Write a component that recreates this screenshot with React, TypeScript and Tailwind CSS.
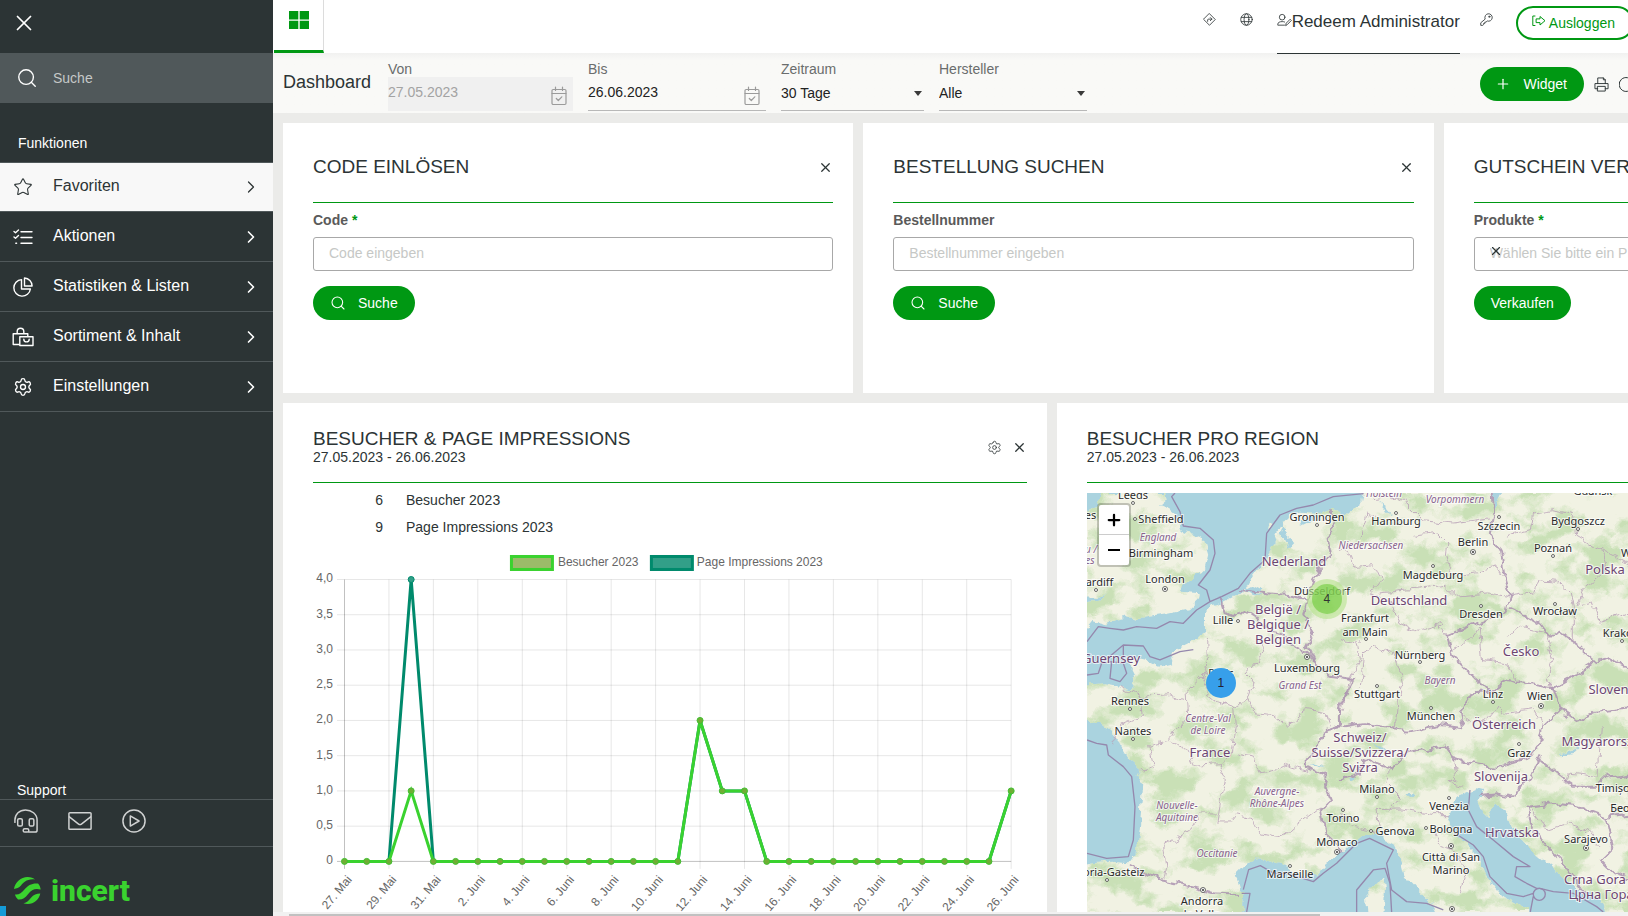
import React from 'react';
import { ChevronRight, Plus, Search, Settings, Star, X } from 'lucide-react';

type IconProps = { className?: string }

const iconProps = {
    fill: 'none',
    stroke: 'currentColor',
    strokeLinecap: 'round' as const,
    strokeLinejoin: 'round' as const,
    'aria-hidden': true,
}

function ChecklistIcon({ className }: IconProps) {
    return (
        <svg {...iconProps} viewBox="0 0 20 20" strokeWidth="1.4" className={className}>
            <path d="M1 4.500l1.500 1.300L5.500 3M1 10l1.500 1.300L5.500 8.500M8 4.800h11M8 10.500h11M8 16.200h11M2.800 16.200h.8" />
        </svg>
    )
}

function PieIcon({ className }: IconProps) {
    return (
        <svg {...iconProps} viewBox="0 0 20 20" strokeWidth="1.4" className={className}>
            <path d="M8.5 2.6A8.3 8.3 0 1 0 17.4 12H8.5z" />
            <path d="M11.5 1v8h7.6a8 8 0 0 0-7.6-8z" />
        </svg>
    )
}

function BagIcon({ className }: IconProps) {
    return (
        <svg {...iconProps} viewBox="0 0 22 20" strokeWidth="1.4" className={className}>
            <path d="M7 17.5H1.2V6.8h14.6v2.4M5.2 6.8V4.6a3.3 3.3 0 0 1 6.6 0v2.2" />
            <path d="M7.8 9.7h13.2v8.8H7.8zM11.8 12.2a2.7 2.7 0 0 0 5.4 0" />
        </svg>
    )
}

function HeadsetIcon({ className }: IconProps) {
    return (
        <svg {...iconProps} viewBox="0 0 26 26" strokeWidth="1.6" className={className}>
            <path d="M1 14.5V12C1 5.500 6 1 12.500 1S25 5.500 25 12v11c0 1.200-.8 2-2 2H16" />
            <rect x="4" y="10.500" width="5" height="8" rx="1.500" />
            <rect x="16.500" y="10.500" width="5" height="8" rx="1.500" />
            <rect x="10" y="21.500" width="6" height="3.500" rx="1.500" />
        </svg>
    )
}

function EnvelopeIcon({ className }: IconProps) {
    return (
        <svg {...iconProps} viewBox="0 0 26 20" strokeWidth="1.6" className={className}>
            <rect x="1" y="1" width="24" height="18" rx="1" />
            <path d="M1.500 5.500l10 7.800q1.500 1 3 0l10-7.800" />
        </svg>
    )
}

function PlayIcon({ className }: IconProps) {
    return (
        <svg {...iconProps} viewBox="0 0 26 26" strokeWidth="1.6" className={className}>
            <circle cx="13" cy="13" r="12" />
            <path d="M9 7.500v11L18.500 13z" />
        </svg>
    )
}

function CalendarIcon({ className }: IconProps) {
    return (
        <svg {...iconProps} viewBox="0 0 16 20" strokeWidth="1.2" className={className}>
            <rect x="1" y="3.500" width="14" height="15" rx="1.200" />
            <path d="M1 7.500h14M4.500 1v3.500M11.500 1v3.500M5.300 12.500l2 2 3.500-3.700" />
        </svg>
    )
}

function DirectionIcon({ className }: IconProps) {
    return (
        <svg {...iconProps} viewBox="0 0 14 14" strokeWidth="0.9" className={className}>
            <path d="M7 .8L13.200 7 7 13.200.8 7zM5 9V7.500C5 6.900 5.300 6.600 5.900 6.600H9.500M7.900 4.900l1.700 1.700-1.700 1.700" />
        </svg>
    )
}

function GlobeIcon({ className }: IconProps) {
    return (
        <svg {...iconProps} viewBox="0 0 14 14" strokeWidth="0.9" className={className}>
            <circle cx="7" cy="7" r="6.200" />
            <ellipse cx="7" cy="7" rx="2.600" ry="6.200" />
            <path d="M1.500 4.700h11M1.500 9.300h11" />
        </svg>
    )
}

function UserPenIcon({ className }: IconProps) {
    return (
        <svg {...iconProps} viewBox="0 0 16 14" strokeWidth="0.9" className={className}>
            <circle cx="5.500" cy="4" r="3" />
            <path d="M8 12.500H.8V11.600C.8 9.600 3 8.700 5.500 8.700c1 0 1.900.1 2.600.4M9.300 12.600l.5-2.200L14 6.200l1.300 1.300-4.100 4.200z" />
        </svg>
    )
}

function KeyIcon({ className }: IconProps) {
    return (
        <svg {...iconProps} viewBox="0 0 14 14" strokeWidth="0.9" className={className}>
            <path d="M5.400 6.200a4 4 0 1 1 2.400 2.400L6.500 9.800H5.200v1.400H3.900v1.300L3 13.300H.8V11z" />
            <circle cx="10" cy="4" r=".7" />
        </svg>
    )
}

function LogoutIcon({ className }: IconProps) {
    return (
        <svg {...iconProps} viewBox="0 0 14 12" strokeWidth="1" className={className}>
            <path d="M3 1H.8v9.500H3M4.500 3.900H8V1.500L13 5.700 8 10V7.600H4.500z" />
        </svg>
    )
}

function PrinterIcon({ className }: IconProps) {
    return (
        <svg {...iconProps} viewBox="0 0 16 16" strokeWidth="1" className={className}>
            <path d="M4 7V1h6l2 2v4M10 1v2h2M4 12.500H1V7h14v5.500h-3M4 10h8v5H4z" />
        </svg>
    )
}

function GearIcon({ className }: IconProps) {
    return <Settings strokeWidth={1.6} className={className} />
}

function StarIcon({ className }: IconProps) {
    return <Star strokeWidth={1.3} className={className} />
}

const navItems = [
    { label: 'Favoriten', icon: StarIcon, active: true },
    { label: 'Aktionen', icon: ChecklistIcon },
    { label: 'Statistiken & Listen', icon: PieIcon },
    { label: 'Sortiment & Inhalt', icon: BagIcon },
    { label: 'Einstellungen', icon: GearIcon },
]

function Sidebar() {
    return (
        <aside className="flex w-[273px] shrink-0 flex-col bg-[#2c3435] text-white">
            <div className="flex h-[53px] items-center pb-2 pl-2.5">
                <button aria-label="Menü schließen" className="p-px">
                    <X className="size-[26px]" strokeWidth={1.6} />
                </button>
            </div>
            <div className="flex h-[50px] items-center bg-[#50585a] pl-4">
                <Search className="size-[22px] shrink-0" strokeWidth={1.5} />
                <input
                    type="text"
                    aria-label="Suche"
                    placeholder="Suche"
                    className="ml-[15px] w-full bg-transparent text-sm outline-none placeholder:text-[#c5c8c8]"
                />
            </div>
            <h2 className="flex h-[59px] items-end px-[18px] pb-[9px] text-sm">Funktionen</h2>
            <nav>
                {navItems.map(({ label, icon: Icon, active }) => (
                    <a
                        key={label}
                        href="#"
                        className={active
                            ? 'flex h-[50px] items-center border-y border-[#50585a] bg-[#f8f8f8] px-3 text-[#2c3435]'
                            : 'flex h-[50px] items-center border-b border-[#50585a] px-3'}
                    >
                        <Icon className="h-5 w-[22px] shrink-0" />
                        <span className="ml-[19px] flex-1 pb-0.5 text-base">{label}</span>
                        <ChevronRight className="size-5" strokeWidth={active ? 1.5 : 2} />
                    </a>
                ))}
            </nav>
            <h2 className="mt-auto px-[17px] text-sm leading-[18px]">Support</h2>
            <div className="flex h-12 items-center gap-[30px] border-y border-[#50585a] px-3.5 pb-1 text-[#d0d2d2]">
                <a href="#" aria-label="Hotline"><HeadsetIcon className="h-6 w-6" /></a>
                <a href="#" aria-label="E-Mail"><EnvelopeIcon className="h-6 w-6" /></a>
                <a href="#" aria-label="Videos"><PlayIcon className="h-6 w-6" /></a>
            </div>
            <div className="flex h-[69px] items-center gap-2.5 pt-[18px] pl-3.5">
                <svg viewBox="0 0 27 27" className="size-[27px]" fill="#3ad22f" aria-hidden>
                    <path d="M0 12C1 5 7 0 13.500 0c3.500 0 6 1 7.500 2.500C13 1.500 9 6 7 8.500 5 10.800 2.500 11.500 0 12z" />
                    <path d="M1 17.500c4 .5 6.500-1.500 9-4.500 4-5 8-7 14-6.500 1.500 1.500 2.500 4 2.700 6-5.500-1.500-9 0-12.500 4.500C11 21 8 23 4 22.500 2.500 21 1.500 19.500 1 17.500z" />
                    <path d="M9.500 26.300c3.500-.8 5.500-3 7.500-5.500 2.500-3 5.500-4.300 9.300-4.300-1.300 6-6.300 10.500-12.500 10.500-1.500 0-3-.2-4.300-.7z" />
                </svg>
                <span className="font-[Roboto,sans-serif] text-[30px] leading-none font-extrabold text-[#3ad22f]">incert</span>
            </div>
        </aside>
    )
}

function TopBar() {
    return (
        <header className="-mr-1.5 flex h-[53px] bg-white text-[#2c3435]">
            <a href="#" aria-label="Dashboard" className="ml-px flex w-[50px] justify-center border-r border-b-3 border-r-[#dcdcdc] border-b-[#009813] pt-[11px] text-[#009813]">
                <svg viewBox="0 0 20 18" className="ml-px h-[18px] w-5" fill="currentColor" aria-hidden>
                    <path d="M0 0h9.300v8.400H0zM10.700 0H20v8.400h-9.300zM0 9.700h9.300V18H0zM10.700 9.700H20V18h-9.300z" />
                </svg>
            </a>
            <div className="flex flex-1 items-start justify-end">
                <button aria-label="Weiterleiten" className="mt-[13px]"><DirectionIcon className="size-[13px]" /></button>
                <button aria-label="Sprache" className="mt-[13px] ml-6"><GlobeIcon className="size-[13px]" /></button>
                <a href="#" className="relative z-10 ml-6 flex h-[54px] border-b border-[#2c3435] pt-[9px] text-[17px]">
                    <UserPenIcon className="mt-1 h-3.5 w-[15px]" />
                    Redeem Administrator
                </a>
                <button aria-label="Passwort" className="mt-[13px] ml-5"><KeyIcon className="size-[13px]" /></button>
                <button className="mt-1.5 ml-[23px] flex h-[34px] items-center gap-[3px] rounded-full border-2 border-[#009813] pr-[17px] pl-3.5 text-sm text-[#009813]">
                    <LogoutIcon className="mb-1 h-3 w-[14px]" />
                    Ausloggen
                </button>
            </div>
        </header>
    )
}

type DateFieldProps = { id: string, label: string, value: string, disabled?: boolean }

function DateField({ id, label, value, disabled }: DateFieldProps) {
    return (
        <div className={disabled ? 'w-[185px]' : 'w-[178px]'}>
            <label htmlFor={id} className="block pt-px leading-4 text-[#6a6d6d]">{label}</label>
            <div className={disabled ? 'flex h-[34px] items-center bg-[#f0f0f0] pr-1.5 text-[#a3a3a3]' : 'flex h-[34px] items-center border-b border-[#b8b8b8] pr-1.5 text-[#222]'}>
                <input id={id} type="text" defaultValue={value} disabled={disabled} className="w-full min-w-0 bg-transparent pb-1 outline-none" />
                <CalendarIcon className="mt-1 h-5 w-4 shrink-0 text-[#9b9b9b]" />
            </div>
        </div>
    )
}

type SelectFieldProps = { id: string, label: string, options: string[], className: string }

function SelectField({ id, label, options, className }: SelectFieldProps) {
    return (
        <div className={className}>
            <label htmlFor={id} className="block pt-px leading-4 text-[#6a6d6d]">{label}</label>
            <div className="relative">
                <select id={id} className="block h-[34px] w-full appearance-none border-b border-[#b8b8b8] bg-transparent pb-0.5 text-[#222] outline-none">
                    {options.map(option => <option key={option}>{option}</option>)}
                </select>
                <svg viewBox="0 0 8 5" className="pointer-events-none absolute top-3.5 right-0.5 h-[5px] w-2" fill="#3a3a3a" aria-hidden>
                    <path d="M0 0h8L4 5z" />
                </svg>
            </div>
        </div>
    )
}

function FilterBar() {
    return (
        <div className="-mr-1.5 flex h-[60px] items-end gap-[15px] bg-[#f9f9f7] bg-linear-to-b from-[#f1f1f0] to-[#f9f9f7] to-12% pb-0.5 pl-2.5 text-sm">
            <h1 className="w-[90px] self-center text-lg text-[#2c3435]">Dashboard</h1>
            <DateField id="from" label="Von" value="27.05.2023" disabled />
            <DateField id="to" label="Bis" value="26.06.2023" />
            <SelectField id="period" label="Zeitraum" options={['30 Tage', '7 Tage']} className="w-[143px]" />
            <SelectField id="vendor" label="Hersteller" options={['Alle']} className="w-[148px]" />
            <div className="ml-auto flex items-center gap-2.5 pb-2.5 text-[#2c3435]">
                <button className="flex h-[34px] items-center gap-3 rounded-full bg-[#009813] pr-[17px] pl-[15px] text-white">
                    <Plus className="size-4" strokeWidth={1.8} />
                    Widget
                </button>
                <button aria-label="Drucken"><PrinterIcon className="size-[15px]" /></button>
                <button aria-label="Aktualisieren">
                    <svg {...iconProps} viewBox="0 0 15 15" strokeWidth="1" className="size-[15px]"><path d="M13.500 4.500A7 7 0 1 0 14 9M13.500 1v3.500H10" /></svg>
                </button>
            </div>
        </div>
    )
}

type WidgetProps = {
    title: string,
    subtitle?: string,
    settings?: boolean,
    className: string,
    children: React.ReactNode,
}

function Widget({ title, subtitle, settings, className, children }: WidgetProps) {
    return (
        <section className={`min-w-0 bg-white pr-5 pl-[30px] text-sm text-[#2c3435] ${className}`}>
            <div className="flex h-20 items-center justify-between border-b border-[#009813] pt-2">
                <div>
                    <h2 className="text-[19px] leading-5">{title}</h2>
                    {subtitle && <p className="leading-4">{subtitle}</p>}
                </div>
                <div className="flex items-center gap-2.5 pt-0.5">
                    {settings && <button aria-label="Einstellungen"><Settings className="size-[15px]" strokeWidth={1.3} /></button>}
                    <button aria-label={`${title} schließen`}><X className="size-[15px]" strokeWidth={2} /></button>
                </div>
            </div>
            {children}
        </section>
    )
}

type WidgetFormProps = { id: string, label: string, placeholder: string, required?: boolean, button: string, clearable?: boolean }

function WidgetForm({ id, label, placeholder, required, button, clearable }: WidgetFormProps) {
    return (
        <form className="pt-[7px]">
            <label htmlFor={id} className="block leading-5 font-bold text-[#5a5a5a]">
                {label}{required && <span className="text-[#009813]"> *</span>}
            </label>
            <div className="relative mt-[7px]">
                <input id={id} type="text" placeholder={placeholder} className="h-[34px] w-full rounded-[3px] border border-[#a8a8a8] px-[15px] pb-0.5 outline-none placeholder:text-[#c6c8c6]" />
                {clearable && (
                    <button type="button" aria-label="Leeren" className="absolute top-[7px] left-[15px]"><X className="size-3.5" strokeWidth={2} /></button>
                )}
            </div>
            <button type="button" className="mt-[15px] flex h-[34px] items-center rounded-full bg-[#009813] px-[17px] text-white">
                {!clearable && <Search className="mr-3 size-4" strokeWidth={1.6} />}
                {button}
            </button>
        </form>
    )
}

const visitors = [0, 0, 0, 1, 0, 0, 0, 0, 0, 0, 0, 0, 0, 0, 0, 0, 2, 1, 1, 0, 0, 0, 0, 0, 0, 0, 0, 0, 0, 0, 1]
const impressions = visitors.map((v, i) => (i === 3 ? 4 : v))
const dayLabels = ['27. Mai', '29. Mai', '31. Mai', '2. Juni', '4. Juni', '6. Juni', '8. Juni', '10. Juni', '12. Juni', '14. Juni', '16. Juni', '18. Juni', '20. Juni', '22. Juni', '24. Juni', '26. Juni']
const valueLabels = ['0', '0,5', '1,0', '1,5', '2,0', '2,5', '3,0', '3,5', '4,0']

const px = (i: number) => 31.5 + i * 22.23
const py = (v: number) => 320.5 - v * 70.5
const toPoints = (data: number[]) => data.map((v, i) => `${px(i)},${py(v)}`).join(' ')

function VisitorsChart() {
    return (
        <svg viewBox="0 0 714 371" className="w-full" fontSize="12" fill="#666" role="img" aria-label="Besucher und Page Impressions">
            <rect x="198.500" y="15.500" width="41" height="13" fill="#9bbb69" stroke="#3ad22f" strokeWidth="3" />
            <text x="245" y="25">Besucher 2023</text>
            <rect x="338.500" y="15.500" width="41" height="13" fill="#329f88" stroke="#008a6c" strokeWidth="3" />
            <text x="384" y="25">Page Impressions 2023</text>
            {valueLabels.map((label, i) => (
                <g key={label}>
                    <line x1="24" x2={px(30)} y1={py(i / 2)} y2={py(i / 2)} stroke="#000" strokeOpacity={i === 0 ? 0.25 : 0.1} />
                    <text x="20" y={py(i / 2) + 3} textAnchor="end">{label}</text>
                </g>
            ))}
            {dayLabels.map((label, i) => (
                <g key={label}>
                    <line x1={px(i * 2)} x2={px(i * 2)} y1={py(4)} y2="328" stroke="#000" strokeOpacity={i === 0 ? 0.25 : 0.1} />
                    <text textAnchor="end" transform={`translate(${px(i * 2) + 8} 339) rotate(-50)`}>{label}</text>
                </g>
            ))}
            <polyline points={toPoints(impressions)} fill="none" stroke="#008a6c" strokeWidth="3" />
            <circle cx={px(3)} cy={py(4)} r="3" fill="#329f88" stroke="#008a6c" />
            <polyline points={toPoints(visitors)} fill="none" stroke="#3ad22f" strokeWidth="3" />
            {visitors.map((v, i) => (
                <circle key={i} cx={px(i)} cy={py(v)} r="3" fill="#6fae35" stroke="#3fc030" />
            ))}
        </svg>
    )
}

// outlines are traced on a grid three times finer than the map itself
const landPaths = [
    'M40 0L234 0 239 21 219 39 249 51 269 66 274 106 284 116 319 123 354 146 364 181 354 221 329 246 294 276 284 296 339 301 334 321 309 346 239 361 169 371 154 385 119 371 89 376 59 391 19 381 0 405-10 405-10 325 40 320 60 300 30 312-10 310-10 60 30 40z',
    'M830-10L820 35 790 50 770 70 740 45 700 60 639 56 589 81 569 121 557 161 539 191 519 221 489 261 469 296 449 311 409 331 369 341 354 361 354 421 319 446 279 466 249 486 259 511 219 521 179 501 139 491 129 516 144 546 139 591 99 581 49 571-10 576-10 685 39 691 69 716 99 751 129 801 164 831 149 851 169 881 164 921 159 1001 149 1081 124 1111 69 1106 19 1111-10 1115-10 1270 459 1270 469 1211 449 1141 479 1111 519 1096 559 1111 599 1121 639 1151 689 1146 719 1111 759 1081 789 1051 819 1026 869 1026 919 1056 939 1091 954 1151 999 1201 1029 1231 1049 1270 1331 1270 1329 1251 1279 1226 1239 1201 1199 1151 1179 1101 1144 1056 1104 1031 1084 991 1094 951 1109 911 1169 886 1189 891 1174 921 1189 961 1204 976 1219 931 1259 961 1279 1011 1319 1061 1379 1111 1439 1161 1499 1201 1549 1231 1559 1270 3000 1270 3000-10 1250-10 1235 20 1222 45 1214-10z',
    'M889 1146L894 1191 889 1270 839 1270 834 1211 860 1180z',
    'M540 112L552 104 560 90 548 92zM586 148L600 138 604 150z',
]

const lakePaths = [
    'M586 95L600 130 625 150 605 170 590 140 578 120zM640 85L690 66 680 78 645 95zM470 290L500 275 530 290 505 300 525 310 490 305zM869 21L895 40 919 68 905 60z',
    'M670 818L690 810 712 820 690 815zM860 752L878 755 905 780 890 778zM970 895L978 905 970 915 962 910zM1420 784L1450 775 1478 762 1460 780 1430 787zM785 860L800 850 795 868z',
]

const seaLines = [
    'M264 0L254 11 279 56 289 99 339 106 379 141 384 181 369 231 334 276 359 291 369 326',
    'M0 446L34 401 69 406 109 411 149 401 209 406 249 386 289 391 329 351 369 326 404 311 454 286 489 241 534 201 539 121 579 66 629 46 679 36 739 11 830 2',
    'M0 546L34 541 44 511 109 456 169 459 189 491 219 501 279 476 319 470',
    'M74 506L109 511 119 541 99 566 69 556zM109 456V511M44 511L74 506',
    'M0 741L29 751 59 756 64 786 109 821 134 851 144 941 139 1041 124 1091 59 1096 0 1081',
    'M464 1201L489 1201 479 1257M469 1190L485 1130 520 1118 560 1141 600 1141 679 1166 709 1141 749 1111 809 1051 848 1036 919 1071 899 1111 914 1191 959 1226 1019 1231 1069 1251',
    'M809 1257L809 1191 859 1131 894 1126 909 1171 914 1257',
    'M1149 891L1144 951 1169 1001 1219 1041 1279 1091 1329 1121 1289 1121 1284 1151 1319 1171 1349 1186 1359 1186 1399 1196 1459 1201 1529 1241 1549 1257',
    'M1104 1021L1159 1056 1189 1091 1209 1151 1259 1201 1309 1211 1339 1201M1375 1204A18 18 0 1 1 1339 1204A18 18 0 1 1 1375 1204M1339 1210L1330 1257',
]

const countryBorders = [
    'M1214 0L1219 61 1209 121 1239 171 1254 261 1269 311 1259 351',
    'M1259 351L1199 381 1139 401 1079 426 1099 491 1159 551 1209 596 1259 561 1319 571 1399 586 1459 551 1529 506 1479 461 1419 416 1389 431 1359 391 1309 361 1269 341',
    'M1529 506L1569 496 1640 531M1399 586L1419 651 1469 686 1529 656 1640 645',
    'M1209 596L1159 601 1119 661 1129 706 1059 696 959 716 909 706 829 691 759 701 716 715 700 745 659 800 660 825 719 851 714 881 729 921 699 951 714 1021 759 1061 760 1080',
    'M759 861L819 841 829 801 879 821 919 831 939 801 959 781 1069 761 1099 801 1219 821 1329 791 1359 751 1369 701 1419 651',
    'M1359 791L1329 861 1299 881 1279 911 1229 901 1174 906M1359 801L1409 841 1459 881 1529 881 1559 851 1640 841',
    'M1640 960L1559 971 1479 941 1399 931 1319 941 1329 991 1379 1061 1439 1121 1499 1201M1559 971L1579 1061 1539 1101 1579 1141 1640 1161',
    'M404 311L419 361 439 371 480 352 509 371 539 411 589 421 609 451 640 470 680 500 729 551 799 561 759 641 759 701',
    'M459 291L539 301 609 306 659 321 679 261 699 231 689 211 729 191 719 131 739 111 734 46M659 321L649 361 679 421 659 461 680 500',
    'M129 1121L219 1161 289 1176 379 1201 459 1206',
]

const regionBorders = [
    'M359 441L362 520 345 560 360 600 400 630 440 645 480 620 500 560 480 540 530 480 520 441M350 545L300 590 305 670 260 720 248 745 185 760 200 820 164 831M248 745L290 760 320 820 400 815 430 790 445 700 440 645',
    'M480 620L510 660 560 665 600 700 660 650 720 660 730 700M445 780L500 790 520 840 570 830 600 815 660 835 659 800M400 815L415 860 400 930 390 990 430 990 450 965 490 975 520 1020 570 1030 600 1020 690 950 700 945M390 960L340 960 310 1010 230 1060 240 1120 230 1160',
    'M99 581L160 610 250 605 300 620M70 760L100 700 170 670 160 620',
    'M820 130L840 60 870 75M759 165L790 190 800 220 860 215 880 260 850 300 910 330 940 390 990 415 1060 395 1079 426M980 130L1050 120 1080 150 1075 190 1095 250 1150 240 1230 225 1254 261M860 20L920 10 960 30 1010 80 1100 90 1209 75M875 300L970 290 1080 280 1110 310 1200 300 1269 311M820 590L830 480 870 460 920 480 940 540 950 580 930 640 925 710M759 440L810 450 820 500 790 560 759 660',
    'M1254 130L1330 110 1340 60 1400 50 1460 65 1470 130 1540 170 1640 220M1269 311L1340 300 1350 260 1410 265 1450 300 1459 340 1459 440M1540 170L1560 230 1490 290 1470 340 1520 330 1540 390 1640 350M1099 470L1150 440 1180 400 1190 500 1260 510 1280 550 1300 565M1260 430L1300 400 1380 420 1400 500 1380 560 1399 586',
    'M1119 661L1160 690 1200 680 1230 640 1260 660 1340 650 1369 701M900 960L940 910 900 870 910 830M880 1000L870 950 940 948 1040 965 1094 965M1099 801L1110 860 1080 870 1130 880M1330 941L1380 1010 1440 990 1500 1010 1540 1060M1430 870L1440 840 1530 850 1540 700M760 960L800 1000 850 1010 869 1026M1040 1020L1060 1060 1110 1080 1140 1130 1120 1200',
]

type MapLabel = { x: number, y: number, text: string, kind?: 'country' | 'region', dot?: [number, number], capital?: boolean }

const mapLabels: MapLabel[] = [
    { x: 46, y: 6, text: 'Leeds', dot: [46, 10] },
    { x: 74, y: 30, text: 'Sheffield', dot: [48, 26] },
    { x: 2, y: 26, text: 'les' },
    { x: 74, y: 64, text: 'Birmingham' },
    { x: 71, y: 48, text: 'England', kind: 'region' },
    { x: 4, y: 60, text: 'u /', kind: 'region' },
    { x: 3, y: 71, text: 'es', kind: 'region' },
    { x: 78, y: 90, text: 'London', dot: [78, 96], capital: true },
    { x: 9, y: 93, text: 'Cardiff', dot: [9, 97] },
    { x: 230, y: 28, text: 'Groningen', dot: [230, 32] },
    { x: 207, y: 73, text: 'Nederland', kind: 'country' },
    { x: 191, y: 121, text: 'België /', kind: 'country' },
    { x: 191, y: 136, text: 'Belgique /', kind: 'country' },
    { x: 191, y: 151, text: 'Belgien', kind: 'country' },
    { x: 235, y: 102, text: 'Düsseldorf' },
    { x: 136, y: 131, text: 'Lille', dot: [151, 128] },
    { x: 24, y: 170, text: 'Guernsey', kind: 'country' },
    { x: 134, y: 184, text: 'Paris' },
    { x: 220, y: 179, text: 'Luxembourg', dot: [220, 164], capital: true },
    { x: 213, y: 196, text: 'Grand Est', kind: 'region' },
    { x: 43, y: 212, text: 'Rennes', dot: [43, 216] },
    { x: 46, y: 242, text: 'Nantes', dot: [46, 246] },
    { x: 121, y: 229, text: 'Centre-Val', kind: 'region' },
    { x: 121, y: 241, text: 'de Loire', kind: 'region' },
    { x: 123, y: 264, text: 'France', kind: 'country' },
    { x: 90, y: 316, text: 'Nouvelle-', kind: 'region' },
    { x: 90, y: 328, text: 'Aquitaine', kind: 'region' },
    { x: 190, y: 302, text: 'Auvergne-', kind: 'region' },
    { x: 190, y: 314, text: 'Rhône-Alpes', kind: 'region' },
    { x: 130, y: 364, text: 'Occitanie', kind: 'region' },
    { x: 203, y: 385, text: 'Marseille', dot: [203, 373] },
    { x: 115, y: 412, text: 'Andorra', dot: [116, 397], capital: true },
    { x: 115, y: 425, text: 'la Vella' },
    { x: 20, y: 383, text: 'Vitoria-Gasteiz', dot: [20, 387] },
    { x: 256, y: 329, text: 'Torino', dot: [256, 317] },
    { x: 250, y: 353, text: 'Monaco', dot: [250, 359], capital: true },
    { x: 297, y: 4, text: 'Holstein', kind: 'region' },
    { x: 368, y: 10, text: 'Vorpommern', kind: 'region' },
    { x: 309, y: 32, text: 'Hamburg', dot: [309, 20] },
    { x: 284, y: 56, text: 'Niedersachsen', kind: 'region' },
    { x: 412, y: 37, text: 'Szczecin', dot: [412, 24] },
    { x: 491, y: 32, text: 'Bydgoszcz', dot: [491, 36] },
    { x: 506, y: 2, text: 'Gdańsk' },
    { x: 386, y: 53, text: 'Berlin', dot: [386, 59], capital: true },
    { x: 466, y: 59, text: 'Poznań', dot: [466, 63] },
    { x: 560, y: 64, text: 'Warszawa' },
    { x: 518, y: 81, text: 'Polska', kind: 'country' },
    { x: 346, y: 86, text: 'Magdeburg', dot: [346, 73] },
    { x: 322, y: 112, text: 'Deutschland', kind: 'country' },
    { x: 394, y: 125, text: 'Dresden', dot: [394, 113] },
    { x: 468, y: 122, text: 'Wrocław', dot: [468, 111] },
    { x: 278, y: 129, text: 'Frankfurt' },
    { x: 278, y: 143, text: 'am Main', dot: [279, 146] },
    { x: 535, y: 144, text: 'Kraków', dot: [535, 148] },
    { x: 434, y: 163, text: 'Česko', kind: 'country' },
    { x: 333, y: 166, text: 'Nürnberg', dot: [333, 169] },
    { x: 353, y: 191, text: 'Bayern', kind: 'region' },
    { x: 290, y: 205, text: 'Stuttgart', dot: [290, 193] },
    { x: 406, y: 205, text: 'Linz', dot: [406, 209] },
    { x: 453, y: 207, text: 'Wien', dot: [454, 213], capital: true },
    { x: 532, y: 201, text: 'Slovensko', kind: 'country' },
    { x: 344, y: 227, text: 'München', dot: [344, 215] },
    { x: 417, y: 236, text: 'Österreich', kind: 'country' },
    { x: 518, y: 253, text: 'Magyarország', kind: 'country' },
    { x: 273, y: 249, text: 'Schweiz/', kind: 'country' },
    { x: 273, y: 264, text: 'Suisse/Svizzera/', kind: 'country' },
    { x: 273, y: 279, text: 'Svizra', kind: 'country' },
    { x: 432, y: 264, text: 'Graz', dot: [432, 251] },
    { x: 414, y: 288, text: 'Slovenija', kind: 'country' },
    { x: 290, y: 300, text: 'Milano', dot: [290, 304] },
    { x: 362, y: 317, text: 'Venezia', dot: [362, 305] },
    { x: 534, y: 299, text: 'Timișoara' },
    { x: 545, y: 319, text: 'Београд' },
    { x: 308, y: 342, text: 'Genova', dot: [284, 338] },
    { x: 364, y: 340, text: 'Bologna', dot: [339, 335] },
    { x: 425, y: 344, text: 'Hrvatska', kind: 'country' },
    { x: 499, y: 350, text: 'Sarajevo', dot: [499, 355], capital: true },
    { x: 364, y: 368, text: 'Città di San', dot: [364, 353], capital: true },
    { x: 364, y: 381, text: 'Marino' },
    { x: 365, y: 430, text: 'Roma', dot: [365, 416], capital: true },
    { x: 512, y: 391, text: 'Crna Gora /', kind: 'country' },
    { x: 514, y: 406, text: 'Црна Гора', kind: 'country' },
]

function RegionMap() {
    return (
        <div className="relative mt-2.5 overflow-hidden bg-[#aad3df]">
            <svg width="1000" height="419" viewBox="0 0 1000 419" className="max-w-none font-['Noto_Sans','Open_Sans',sans-serif]" role="img" aria-label="Karte Europa">
                <defs>
                    <filter id="rough" x="0" y="0" width="100%" height="100%" filterUnits="userSpaceOnUse">
                        <feTurbulence type="fractalNoise" baseFrequency="0.09" numOctaves="3" seed="4" />
                        <feDisplacementMap in="SourceGraphic" scale="10" xChannelSelector="R" yChannelSelector="G" />
                    </filter>
                    <filter id="forest" x="0" y="0" width="100%" height="100%" filterUnits="userSpaceOnUse" colorInterpolationFilters="sRGB">
                        <feTurbulence type="fractalNoise" baseFrequency="0.03 0.04" numOctaves="6" seed="11" />
                        <feColorMatrix values="0 0 0 0 0.72  0 0 0 0 0.85  0 0 0 0 0.64  5 0 0 0 -2.300" />
                    </filter>
                    <clipPath id="land">
                        {landPaths.map(d => <path key={d} d={d} transform="scale(0.3333)" />)}
                    </clipPath>
                </defs>
                <g filter="url(#rough)">
                    <g transform="scale(0.3333)" fill="#f1f2e3">
                        {landPaths.map(d => <path key={d} d={d} />)}
                    </g>
                    <g clipPath="url(#land)">
                        <rect width="1000" height="419" filter="url(#forest)" opacity="0.7" />
                    </g>
                    <g transform="scale(0.3333)" fill="none" strokeLinejoin="round">
                        {lakePaths.map(d => <path key={d} d={d} fill="#aad3df" />)}
                        {regionBorders.map(d => <path key={d} d={d} stroke="#b99fb8" strokeOpacity="0.8" strokeWidth="3" />)}
                        {countryBorders.map(d => <path key={d} d={d} stroke="#ac93b0" strokeOpacity="0.85" strokeWidth="6" />)}
                    </g>
                </g>
                <g transform="scale(0.3333)" fill="none" stroke="#9588ad" strokeWidth="4" strokeLinejoin="round">
                    {seaLines.map(d => <path key={d} d={d} />)}
                </g>
                {mapLabels.map(({ x, y, text, kind, dot, capital }) => (
                    <g key={text}>
                        {dot && <circle cx={dot[0]} cy={dot[1]} r={capital ? 2.5 : 1.5} fill="#fff" stroke="#444" strokeWidth="0.8" />}
                        {dot && capital && <circle cx={dot[0]} cy={dot[1]} r="1" fill="#333" />}
                        <text
                            x={x}
                            y={y}
                            textAnchor="middle"
                            fontSize={kind === 'country' ? 13 : kind === 'region' ? 10 : 11}
                            fontStyle={kind === 'region' ? 'italic' : 'normal'}
                            fill={kind === 'country' ? '#6d4672' : kind === 'region' ? '#88638d' : '#2b2b2b'}
                            stroke="#fff"
                            strokeOpacity="0.7"
                            strokeWidth="2"
                            paintOrder="stroke"
                        >
                            {text}
                        </text>
                    </g>
                ))}
            </svg>
            <div className="absolute top-2.5 left-2.5 flex w-[34px] flex-col rounded-sm border-2 border-black/20 bg-white bg-clip-padding font-bold text-black">
                <button aria-label="Vergrößern" className="flex h-[30px] items-center justify-center border-b border-[#ccc]"><Plus className="size-[18px]" strokeWidth={3} /></button>
                <button aria-label="Verkleinern" className="flex h-[30px] items-center justify-center">
                    <svg viewBox="0 0 14 14" className="size-3.5" aria-hidden><path d="M1 7h12" stroke="#000" strokeWidth="2" /></svg>
                </button>
            </div>
            <button className="absolute top-[86px] left-[220px] flex size-10 items-center justify-center rounded-full bg-[#b5e28c]/60 text-xs text-[#333]">
                <span className="flex size-[30px] items-center justify-center rounded-full bg-[#6ecc39]/60">4</span>
            </button>
            <button className="absolute top-[175px] left-[119px] flex size-[30px] items-center justify-center rounded-full bg-[#379fea] text-xs text-[#223]">1</button>
        </div>
    )
}

function App() {
    return (
        <div className="relative flex h-screen overflow-hidden bg-[#ebebe9] font-['Liberation_Sans',Arial,sans-serif]">
            <Sidebar />
            <main className="flex min-w-0 flex-1 flex-col overflow-hidden">
                <TopBar />
                <FilterBar />
                <div className="min-h-0 flex-1 overflow-hidden">
                    <div className="grid min-w-[1751px] grid-cols-9 gap-2.5 p-2.5">
                        <Widget title="CODE EINLÖSEN" className="col-span-3 h-[270px]">
                            <WidgetForm id="code" label="Code" required placeholder="Code eingeben" button="Suche" />
                        </Widget>
                        <Widget title="BESTELLUNG SUCHEN" className="col-span-3 h-[270px]">
                            <WidgetForm id="order" label="Bestellnummer" placeholder="Bestellnummer eingeben" button="Suche" />
                        </Widget>
                        <Widget title="GUTSCHEIN VERKAUFEN" className="col-span-3 h-[270px]">
                            <WidgetForm id="product" label="Produkte" required clearable placeholder="Wählen Sie bitte ein Produkt" button="Verkaufen" />
                        </Widget>
                        <Widget title="BESUCHER & PAGE IMPRESSIONS" subtitle="27.05.2023 - 26.06.2023" settings className="col-span-4">
                            <dl className="grid grid-cols-[70px_1fr] gap-x-[23px] pt-1 leading-[27px]">
                                <dd className="text-right">6</dd>
                                <dt>Besucher 2023</dt>
                                <dd className="text-right">9</dd>
                                <dt>Page Impressions 2023</dt>
                            </dl>
                            <VisitorsChart />
                        </Widget>
                        <Widget title="BESUCHER PRO REGION" subtitle="27.05.2023 - 26.06.2023" settings className="col-span-5">
                            <RegionMap />
                        </Widget>
                    </div>
                </div>
                <div className="flex h-1 shrink-0 items-end bg-[#f1f1f1] pl-4">
                    <div className="h-0.5 w-[77%] bg-[#c1c1c1]" />
                </div>
            </main>
            <div className="absolute bottom-0 left-0 h-2.5 w-1.5 bg-[#159bd7]" />
        </div>
    );
}

export default App;
